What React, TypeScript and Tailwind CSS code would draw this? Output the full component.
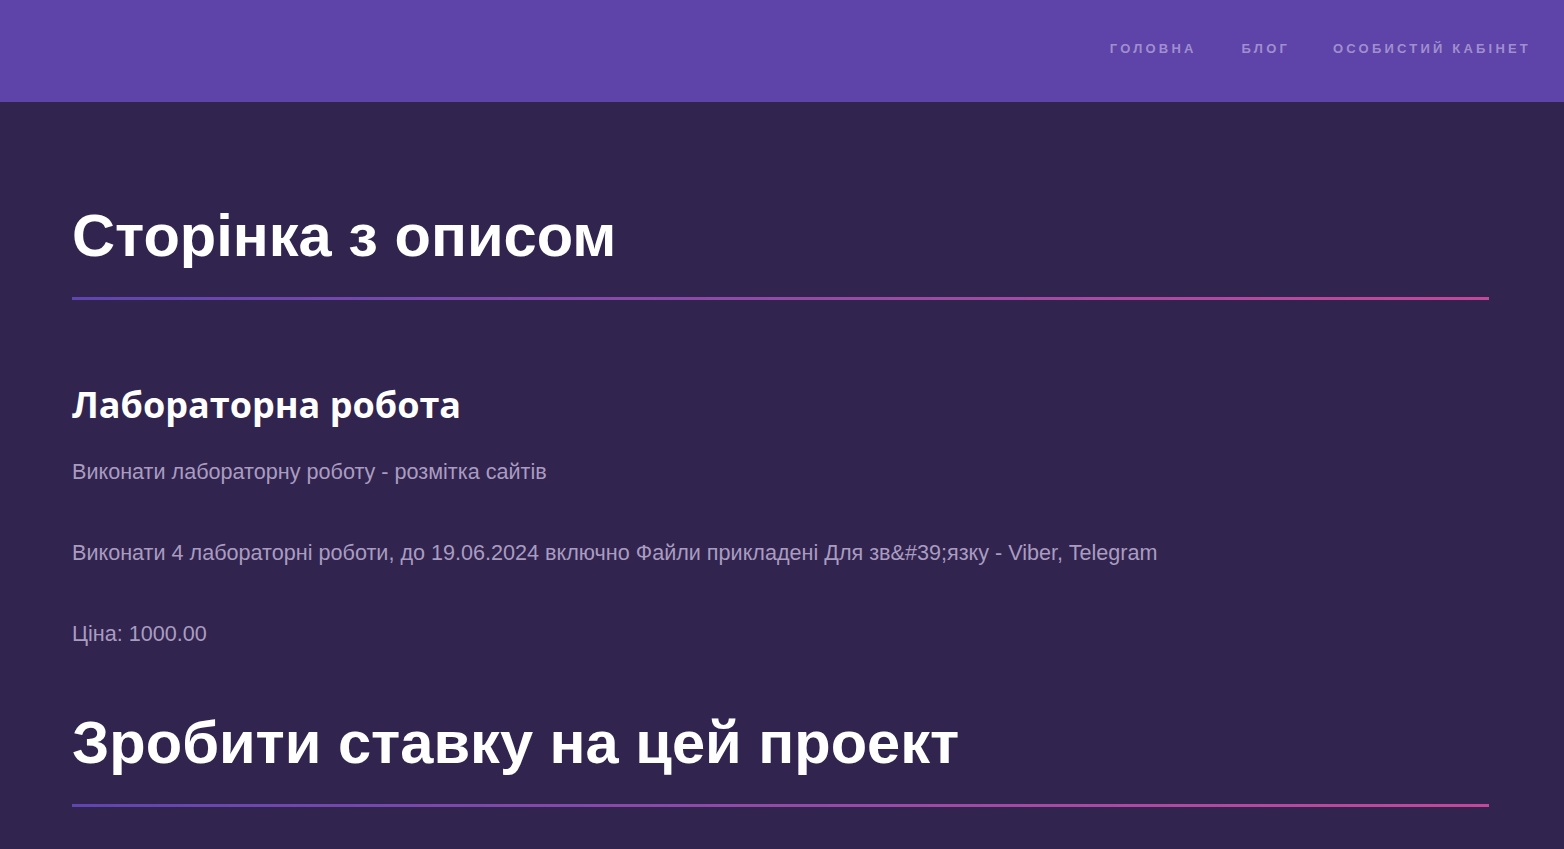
export default function App() {
  return (
    <div className="min-h-screen bg-[#31244f] font-['Liberation_Sans',Arial,sans-serif]">
      <header className="flex h-[102px] items-center justify-end bg-[#5e43a8] pb-[4px] pr-[33px]">
        <nav className="flex items-center gap-[43px] text-[13px] font-bold uppercase tracking-[3.2px] text-[#a08fd0]">
          <a href="#" className="mr-[2px]">Головна</a>
          <a href="#">Блог</a>
          <a href="#">Особистий кабінет</a>
        </nav>
      </header>
      <main className="pl-[72px] pr-[75px] pt-[99px]">
        <h1 className="text-[59.6px] font-bold leading-[69px] text-white">Сторінка з описом</h1>
        <div className="mt-[27px] h-[3px] bg-gradient-to-r from-[#5f45b0] to-[#c4479a]" />
        <h3 className="mt-[81px] font-['Open_Sans',sans-serif] text-[36px] font-bold leading-[48px] text-white">
          Лабораторна робота
        </h3>
        <p className="mt-[30px] text-[21.6px] leading-[25px] text-[#a99cc0]">
          Виконати лабораторну роботу - розмітка сайтів
        </p>
        <p className="mt-[56px] text-[21.6px] leading-[25px] text-[#a99cc0]">
          Виконати 4 лабораторні роботи, до 19.06.2024 включно Файли прикладені Для зв&amp;#39;язку - Viber, Telegram
        </p>
        <p className="mt-[56px] text-[21.6px] leading-[25px] text-[#a99cc0]">Ціна: 1000.00</p>
        <h1 className="mt-[62px] text-[59.6px] font-bold leading-[69px] text-white">Зробити ставку на цей проект</h1>
        <div className="mt-[27px] h-[3px] bg-gradient-to-r from-[#5f45b0] to-[#c4479a]" />
      </main>
    </div>
  );
}
